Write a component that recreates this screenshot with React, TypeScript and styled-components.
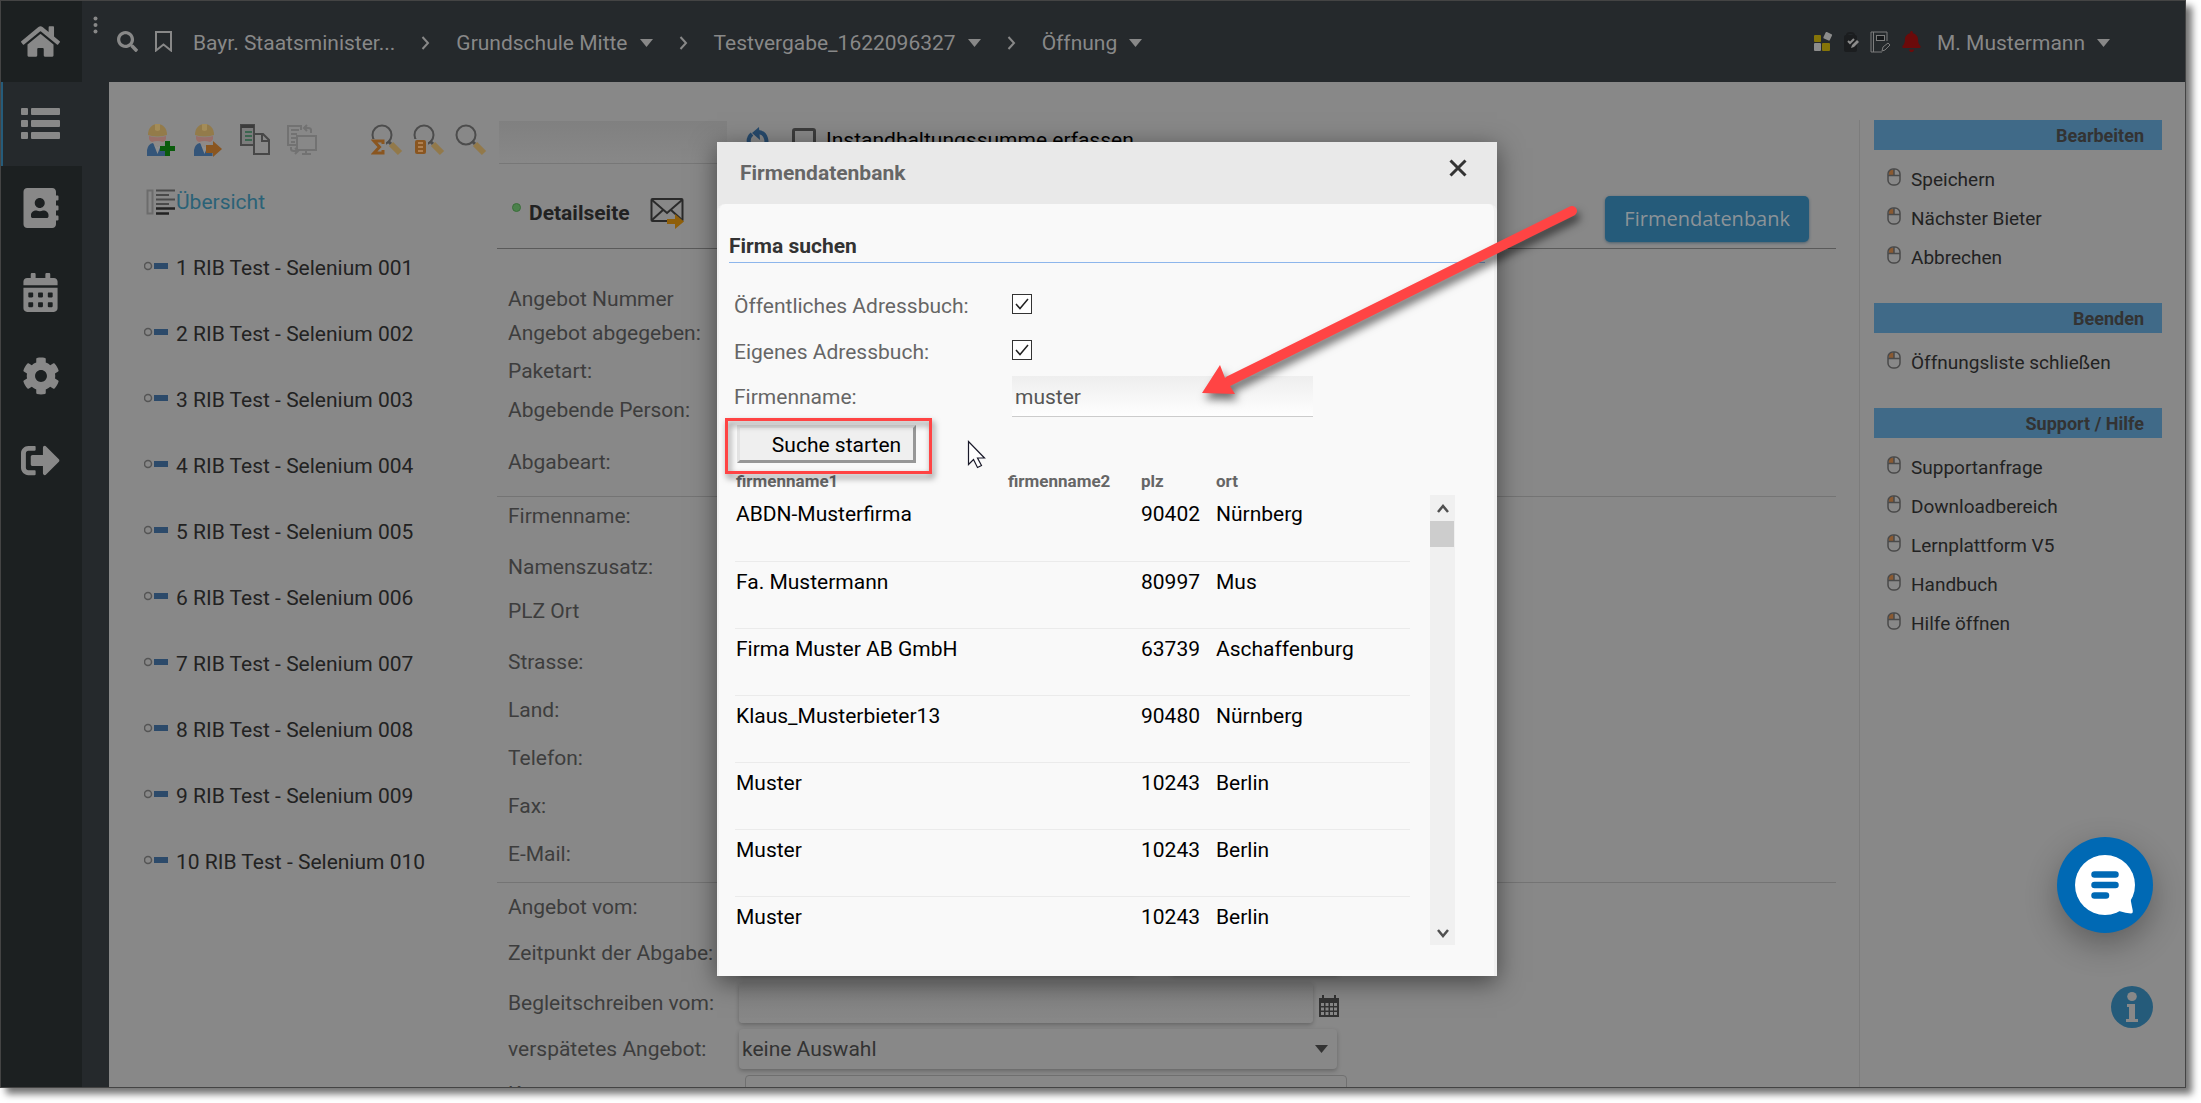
import React from "react";
import styled, { createGlobalStyle, css } from "styled-components";
import {
  FaAddressBook,
  FaBell,
  FaCalendarAlt,
  FaCog,
  FaHome,
  FaSearch,
  FaSignOutAlt,
} from "react-icons/fa";

const color = {
  rail: "#1c2021",
  bar: "#25292c",
  page: "#888888",
  ink: "#222222",
  label: "#3d3d3d",
  blue: "#255b7a",
  heading: "#406a88",
  link: "#2b6277",
  line: "#747474",
  alert: "#ff4444",
};

const Global = createGlobalStyle`
  * { box-sizing: border-box; }
  body {
    margin: 0;
    background: #fff;
    font-family: Roboto, "Liberation Sans", sans-serif;
    font-size: 21px;
    line-height: 24px;
    color: ${color.ink};
  }
  button, input, select, textarea { font: inherit; color: inherit; margin: 0; }
  svg { display: block; flex: none; }
  a { color: inherit; text-decoration: none; }
`;

/* ---------- window frame ---------- */

const Window = styled.div`
  position: relative;
  display: flex;
  margin: 0 15px 15px 0;
  height: calc(100vh - 15px);
  min-height: 600px;
  overflow: hidden;
  border: 1px solid #444;
  background: ${color.bar};
  box-shadow: 6px 6px 7px rgba(0, 0, 0, 0.55);
`;

const Rail = styled.nav`
  flex: none;
  width: 81px;
  background: ${color.rail};
`;

const RailButton = styled.button<{ $active?: boolean }>`
  display: flex;
  align-items: center;
  justify-content: center;
  width: 100%;
  height: 84px;
  padding: 0 2px 0 0;
  border: 0;
  color: ${color.page};
  background: ${(p) => (p.$active ? color.bar : "transparent")};
  box-shadow: ${(p) => (p.$active ? `inset 2px 0 0 ${color.blue}` : "none")};
  &:first-child {
    height: 81px;
  }
`;

const Column = styled.div`
  flex: 1;
  min-width: 0;
  display: flex;
  flex-direction: column;
`;

const TopBar = styled.header`
  flex: none;
  display: flex;
  align-items: center;
  height: 81px;
  padding: 0 75px 0 11px;
  color: ${color.page};
`;

const PlainButton = styled.button`
  display: flex;
  align-items: center;
  padding: 0;
  border: 0;
  background: none;
  color: inherit;
`;

const Kebab = styled(PlainButton)`
  align-self: flex-start;
  margin: 15px 19px 0 0;
`;

const TopTools = styled.div`
  display: flex;
  gap: 17px;
  margin-right: 21px;
`;

const Crumbs = styled.div`
  display: flex;
  align-items: center;
  gap: 26px;
  padding-top: 3px;
`;

const Crumb = styled.button`
  display: flex;
  align-items: center;
  gap: 12px;
  padding: 0;
  border: 0;
  background: none;
  color: inherit;
  white-space: nowrap;
`;

const UserTools = styled.div`
  display: flex;
  align-items: center;
  gap: 10px;
  margin-left: auto;
`;

const UserMenu = styled(Crumb)`
  margin-left: 5px;
  padding-top: 3px;
`;

const Content = styled.div`
  flex: 1;
  min-height: 0;
  display: flex;
  margin-left: 27px;
  background: ${color.page};
  overflow: hidden;
`;

/* ---------- bidder list ---------- */

const Bidders = styled.section`
  flex: none;
  width: 388px;
  padding-left: 35px;
`;

const Toolbar = styled.div`
  display: flex;
  align-items: center;
  height: 43px;
  margin-top: 39px;
  padding-bottom: 6px;
`;

const IconRow = styled.div`
  display: flex;
  align-items: center;
  gap: 17px;
  margin-left: 2px;
`;

const SearchIcons = styled(IconRow)`
  gap: 10px;
  margin-left: 54px;
`;

const BidderList = styled.ul`
  list-style: none;
  margin: 5px 0 0;
  padding: 0;
`;

const Bidder = styled.li`
  height: 66px;
  display: flex;
  align-items: center;
`;

const BidderLink = styled.a<{ $overview?: boolean }>`
  display: flex;
  align-items: center;
  gap: ${(p) => (p.$overview ? "0" : "8px")};
  padding-left: ${(p) => (p.$overview ? "2px" : "0")};
  color: ${(p) => (p.$overview ? color.link : color.ink)};
`;

/* ---------- detail page ---------- */

const Detail = styled.main`
  flex: 1;
  min-width: 0;
  margin-right: 23px;
`;

const FilterInput = styled.input`
  align-self: flex-start;
  width: 228px;
  height: 43px;
  margin: 0 18px 0 2px;
  border: 0;
  border-bottom: 1px solid #777;
  background: linear-gradient(#808080, #888);
`;

const CheckLabel = styled.label`
  display: flex;
  align-items: center;
  gap: 10px;
  margin-left: 22px;
  color: #000;
`;

const SquareCheck = styled.input`
  appearance: none;
  width: 24px;
  height: 24px;
  border: 3px solid #3c3c3c;
  border-radius: 3px;
`;

const DetailHead = styled.div`
  display: flex;
  justify-content: space-between;
  align-items: flex-end;
  height: 85px;
  padding: 0 27px 6px 15px;
  border-bottom: 1px solid #5a5a5a;
`;

const DetailTitle = styled.div`
  display: flex;
  align-items: center;
  gap: 8px;
  height: 46px;
  padding-bottom: 12px;
  & > h1 {
    margin: 0 12px 0 0;
    font-size: 21px;
    font-weight: 700;
  }
`;

const Dot = styled.span`
  width: 9px;
  height: 9px;
  margin-bottom: 12px;
  border-radius: 50%;
  border: 1px solid #3a6e3a;
  background: #4b814b;
`;

const PrimaryButton = styled.button`
  height: 46px;
  padding: 0 19px;
  border: 0;
  border-radius: 5px;
  font-family: "Open Sans", sans-serif;
  font-size: 20px;
  color: #8c9398;
  background: ${color.blue};
  box-shadow: 0 1px 3px rgba(30, 70, 95, 0.6);
`;

const Group = styled.div<{ $top: number }>`
  padding: ${(p) => p.$top}px 0 0 11px;
  & + & {
    border-top: 1px solid ${color.line};
  }
`;

const Row = styled.div<{ $height: number; $center?: boolean }>`
  display: flex;
  align-items: ${(p) => (p.$center ? "center" : "flex-start")};
  height: ${(p) => p.$height}px;
  color: ${color.label};
  & > label {
    flex: none;
    width: 231px;
  }
`;

const fieldLook = css`
  height: 41px;
  border: 0;
  border-radius: 4px;
  background: linear-gradient(#808080, #888);
  box-shadow: 0 2px 4px rgba(0, 0, 0, 0.25);
`;

const Field = styled.input<{ $width: number }>`
  ${fieldLook}
  width: ${(p) => p.$width}px;
`;

const FieldPair = styled.div`
  display: flex;
  gap: 35px;
`;

const DateField = styled.div`
  display: flex;
  align-items: center;
  gap: 6px;
  & > svg {
    margin-top: 6px;
  }
`;

const SelectBox = styled.div`
  position: relative;
  & > select {
    ${fieldLook}
    appearance: none;
    width: 598px;
    height: 40px;
    padding: 0 3px;
    background: ${color.page};
    color: #333;
  }
  & > svg {
    position: absolute;
    right: 9px;
    top: 16px;
  }
`;

const NoteArea = styled.textarea`
  align-self: flex-start;
  width: 602px;
  height: 60px;
  margin: 6px 0 0 6px;
  border: 1px solid #707070;
  border-radius: 4px;
  background: ${color.page};
  resize: none;
`;

/* ---------- action column ---------- */

const Actions = styled.aside`
  flex: none;
  width: 326px;
  margin-top: 38px;
  padding: 0 23px 0 14px;
  border-left: 1px solid #7c7c7c;
`;

const ActionHead = styled.h2`
  margin: 0;
  padding-right: 18px;
  font-size: 18px;
  line-height: 32px;
  height: 30px;
  text-align: right;
  color: #333;
  background: ${color.heading};
`;

const ActionList = styled.ul`
  list-style: none;
  margin: 10px 0 26px;
  padding: 0 0 0 13px;
`;

const ActionItem = styled.li`
  display: flex;
  align-items: center;
  height: 39px;
  font-size: 19px;
  & > a {
    display: flex;
    gap: 10px;
  }
`;

/* ---------- floating buttons ---------- */

const ChatButton = styled.button`
  position: absolute;
  right: 32px;
  bottom: 154px;
  width: 96px;
  height: 96px;
  padding: 0;
  border: 0;
  border-radius: 50%;
  background: #0069b4;
  box-shadow: 0 12px 32px rgba(0, 0, 0, 0.3);
`;

const InfoButton = styled(PlainButton)`
  position: absolute;
  right: 32px;
  bottom: 59px;
`;

/* ---------- dialog ---------- */

const Overlay = styled.div`
  position: absolute;
  inset: 0;
  display: flex;
  justify-content: center;
  align-items: flex-start;
  padding: 141px 0 0 28px;
`;

const Dialog = styled.div`
  position: relative;
  width: 780px;
  background: #e9e9e9;
  box-shadow: 0 6px 24px rgba(0, 0, 0, 0.5);
`;

const DialogHead = styled.header`
  display: flex;
  justify-content: space-between;
  align-items: flex-start;
  height: 62px;
  padding: 17px 30px 0 23px;
  color: #666;
  & > h2 {
    margin: 0;
    font-size: 21px;
    line-height: 28px;
    font-weight: 700;
  }
`;

const DialogBody = styled.div`
  height: 772px;
  padding: 30px 12px 31px;
  border: solid #f1f1f1;
  border-width: 0 3px 0 2px;
  border-radius: 8px 8px 0 0;
  background: #f9f9f9;
`;

const SearchHead = styled.h3`
  margin: 0 -3px 19px -2px;
  padding-bottom: 4px;
  font-size: 21px;
  font-weight: 700;
  color: #333;
  border-bottom: 1px solid #8db6ec;
`;

const SearchRow = styled.div<{ $height: number }>`
  display: grid;
  grid-template-columns: 278px 1fr;
  align-items: center;
  height: ${(p) => p.$height}px;
  padding-left: 3px;
  color: #666;
`;

const BoxCheck = styled.span`
  position: relative;
  width: 20px;
  height: 20px;
  margin-top: -4px;
  & > input {
    appearance: none;
    display: block;
    width: 20px;
    height: 20px;
    border: 1px solid #333;
    background: #fff;
  }
  & > svg {
    position: absolute;
    inset: 0;
    pointer-events: none;
  }
`;

const NameInput = styled.input`
  width: 301px;
  height: 41px;
  padding: 2px 3px 0;
  border: 0;
  border-bottom: 1px solid #ccc;
  color: #555;
  background: linear-gradient(#eee, #fefefe);
`;

const StartWrap = styled.div`
  position: relative;
  width: 179px;
  margin: 7px 0 5px 6px;
`;

const StartButton = styled.button`
  display: block;
  width: 179px;
  height: 38px;
  padding: 2px 0 0 20px;
  border: 3px solid;
  border-color: #e3e3e3 #979797 #979797 #e3e3e3;
  color: #000;
  background: #efefef;
`;

const Marker = styled.div`
  position: absolute;
  inset: -7px -16px -11px -12px;
  border: 3px solid ${color.alert};
  filter: drop-shadow(2px 4px 3px rgba(0, 0, 0, 0.5));
  pointer-events: none;
`;

const Results = styled.div`
  display: flex;
  gap: 20px;
  height: 477px;
  padding-left: 4px;
  overflow: hidden;
`;

const Table = styled.table`
  width: 675px;
  height: max-content;
  border-collapse: collapse;
  table-layout: fixed;
  color: #000;
  & th {
    height: 26px;
    padding: 0 0 0 1px;
    font-size: 17px;
    font-weight: 700;
    text-align: left;
    color: #666;
  }
  & td {
    height: 67px;
    padding: 8px 0 0 1px;
    vertical-align: top;
    white-space: nowrap;
    border-bottom: 1px solid #ebebeb;
  }
`;

const NameColumn = styled.col`
  width: 272px;
`;

const ExtraColumn = styled.col`
  width: 133px;
`;

const ZipColumn = styled.col`
  width: 75px;
`;

const ScrollTrack = styled.div`
  display: flex;
  flex-direction: column;
  justify-content: space-between;
  width: 25px;
  margin-top: 27px;
  background: #f0f0f0;
`;

const ScrollButton = styled(PlainButton)`
  justify-content: center;
  width: 25px;
  height: 26px;
  padding-top: 2px;
`;

const ScrollThumb = styled.div`
  width: 24px;
  height: 26px;
  margin-bottom: auto;
  background: #cdcdcd;
`;

const Cursor = styled.svg`
  position: absolute;
  left: 250px;
  top: 298px;
`;

const Arrow = styled.svg`
  position: absolute;
  left: 480px;
  top: 58px;
  filter: drop-shadow(3px 6px 4px rgba(0, 0, 0, 0.55));
  pointer-events: none;
`;

/* ---------- drawings ---------- */

const Caret = ({ fill = "currentColor" }: { fill?: string }) => (
  <svg width="13" height="8" viewBox="0 0 13 8">
    <path d="M0 0h13L6.500 8z" fill={fill} />
  </svg>
);

const Chevron = () => (
  <svg width="9" height="14" viewBox="0 0 9 14">
    <path d="M1.500 1l5.500 6-5.500 6" fill="none" stroke="currentColor" strokeWidth="2" />
  </svg>
);

const ListIcon = () => (
  <svg width="39" height="32" viewBox="0 0 39 32" fill="currentColor">
    {[0, 12, 24].map((y) => (
      <g key={y}>
        <rect x="0" y={y} width="7" height="7" rx="1" />
        <rect x="10" y={y} width="29" height="7" rx="1" />
      </g>
    ))}
  </svg>
);

const WorkerIcon = ({ kind }: { kind: "add" | "go" }) => (
  <svg width="30" height="34" viewBox="0 0 30 34">
    <path d="M2 12C2 5 6 1 11.500 1S21 5 21 12q-9.500 3-19 0z" fill="#937b4a" />
    <path d="M9 1h5v6q-2.500 2-5 0z" fill="#a38c58" />
    <path d="M3 13q8.500 2.500 17 0v3c-1 4-4 7-8.500 7S4 20 3 16z" fill="#8f8a88" />
    <path d="M3 13q8.500 2.500 17 0v3q-1 3-3 3-5.500-2-11 0-2 0-3-3z" fill="#996f69" />
    <path d="M1 33V27q1-6 6-7l4.500 8 3-5 5 4v6z" fill="#345579" />
    <path d="M8 22l3.500 9 3.500-9-3.500 2z" fill="#8f8f8f" />
    {kind === "add" ? (
      <path d="M19 18h5v5h5v5h-5v5h-5v-5h-5v-5h5z" fill="#0a5c0c" />
    ) : (
      <path d="M13 22h7v-4l9 8-9 8v-4h-7z" fill="#8a5620" />
    )}
  </svg>
);

const CopyIcon = () => (
  <svg width="30" height="32" viewBox="0 0 30 32" fill="none">
    <path d="M1 1h13v20H1z" stroke="#474747" strokeWidth="2" fill="#7c7c7c" />
    <path d="M1 2.500h13" stroke="#3c3c3c" strokeWidth="3" />
    <path d="M5 8h7M5 12h7M5 16h7" stroke="#3c6650" strokeWidth="2" />
    <path d="M14 10h9l6 6v14H14z" stroke="#474747" strokeWidth="2" fill={color.page} />
    <path d="M22 10v7h7" stroke="#474747" strokeWidth="2" />
  </svg>
);

const TransferIcon = () => (
  <svg width="30" height="32" viewBox="0 0 30 32" fill="none" stroke="#727272" strokeWidth="2">
    <path d="M9 21H1V2h13v4" />
    <path d="M4 6h8M4 10h6M4 14h5M4 18h4" />
    <path d="M10 12h19v14H10z" />
    <path d="M19 26v3M15 30h9" />
    <path d="M24 9V6q0-2-3-2h-4m3-3l-3 3 3 3M4 23v2q0 2 3 2h4m-3-3l3 3-3 3" />
  </svg>
);

const LensIcon = ({ kind }: { kind?: "sum" | "data" }) => (
  <svg width="32" height="32" viewBox="0 0 32 32" fill="none">
    <circle cx="11" cy="11" r="9.500" stroke="#4c4c4c" strokeWidth="2" />
    <path d="M17 17l3 3" stroke="#4c4c4c" strokeWidth="3" />
    <path d="M20 20l9 9" stroke="#92794a" strokeWidth="6" />
    {kind && <path d="M0 15h15v17H0z" fill={color.page} />}
    {kind === "sum" && (
      <path d="M12 20v-3H3l5.500 6L3 29h9v-3" stroke="#8a5620" strokeWidth="3" />
    )}
    {kind === "data" && (
      <>
        <rect x="2" y="16" width="11" height="14" rx="2" fill="#8a5620" />
        <path d="M5 19h5M5 23h5M5 27h5" stroke="#b08050" strokeWidth="2" />
      </>
    )}
  </svg>
);

const OverviewIcon = () => (
  <svg width="30" height="26" viewBox="0 0 30 26" fill="none">
    <path d="M1.500 1.500h5v23h-5z" stroke="#6c6c6c" strokeWidth="2" />
    <path d="M10 1.500h19M10 6h13M10 10.500h19M10 15h13" stroke="#4a4a4a" strokeWidth="2" />
    <path d="M10 19.500h19M10 24.500h13" stroke="#222" strokeWidth="2.500" />
  </svg>
);

const KeyIcon = () => (
  <svg width="24" height="14" viewBox="0 0 24 14">
    <circle cx="4" cy="5" r="3.500" fill="none" stroke="#555" strokeWidth="1.500" />
    <rect x="10" y="2" width="14" height="6" fill="#2c4a6a" />
  </svg>
);

const RefreshIcon = () => (
  <svg width="25" height="26" viewBox="0 0 25 26" fill="none">
    <path d="M7 21A9 9 0 0 1 7 7M13 5A9 9 0 0 1 18 21" stroke="#274a6c" strokeWidth="4" />
    <path d="M14 0L7 6l8 7z" fill="#274a6c" />
  </svg>
);

const MailIcon = () => (
  <svg width="35" height="32" viewBox="0 0 35 32" fill="none">
    <rect x="1.500" y="2" width="31" height="22" rx="1" stroke="#2a2a2a" strokeWidth="2" />
    <path d="M2 3l15 13L32 3M2 23l11-10M32 23L21 13" stroke="#2a2a2a" strokeWidth="2" />
    <path d="M17 22h8v-5l9 7.500-9 7.500v-5h-8z" fill="#8f5f0a" />
  </svg>
);

const MouseIcon = () => (
  <svg width="14" height="18" viewBox="0 0 14 18">
    <path d="M2 2h5v5H2z" fill="#8a5a32" />
    <rect x="1" y="1" width="12" height="16" rx="5" fill="none" stroke="#4a4a4a" strokeWidth="1.500" />
    <path d="M1 7.500h12M7 1v6.500" stroke="#4a4a4a" strokeWidth="1.500" />
  </svg>
);

const MonthIcon = () => (
  <svg width="20" height="22" viewBox="0 0 20 22">
    <path d="M4 0v4M16 0v4" stroke="#333" strokeWidth="2" />
    <path d="M0 3h20v19H0z" fill="#333" />
    <path
      d="M2 8h3v3H2zM6.500 8h3v3h-3zM11 8h3v3h-3zM15 8h3v3h-3zM2 12.500h3v3H2zM6.500 12.500h3v3h-3zM11 12.500h3v3h-3zM15 12.500h3v3h-3zM2 17h3v3H2zM6.500 17h3v3h-3zM11 17h3v3h-3zM15 17h3v3h-3z"
      fill={color.page}
    />
  </svg>
);

const BlocksIcon = () => (
  <svg width="20" height="20" viewBox="0 0 20 20">
    <rect x="0" y="3" width="7" height="7" rx="1" fill="#857408" />
    <rect x="8" y="11" width="8" height="8" rx="1" fill="#857408" />
    <rect x="0" y="11" width="7" height="8" rx="1" fill="#8c8c8c" />
    <rect x="10" y="1" width="7" height="7" rx="1" fill="#8c8c8c" transform="rotate(25 14 5)" />
  </svg>
);

const ClipIcon = () => (
  <svg width="16" height="20" viewBox="0 0 16 20">
    <rect x="0" y="3" width="13" height="17" rx="2" fill="#1b1d1f" />
    <path d="M3 5V3q0-2 3.500-2T10 3v2z" fill="none" stroke="#1b1d1f" strokeWidth="2" />
    <path d="M4 9l2 2 4-4" fill="none" stroke="#8c8c8c" strokeWidth="2" />
    <path d="M7 16l1-3 5-5 2 2-5 5z" fill="#8c8c8c" />
  </svg>
);

const NotebookIcon = () => (
  <svg width="21" height="22" viewBox="0 0 21 22" fill="none" stroke="#7d7d7d">
    <path d="M12 21H1V1h16v9M3.500 1v20" />
    <rect x="6.500" y="4.500" width="8" height="5" fill="#17191b" />
    <path d="M12 20l1-4 5-4 2 2-5 5z" />
  </svg>
);

const InfoIcon = () => (
  <svg width="42" height="42" viewBox="0 0 42 42">
    <circle cx="21" cy="21" r="21" fill={color.blue} />
    <ellipse cx="21" cy="10.500" rx="4.800" ry="4.500" fill={color.page} />
    <path d="M16 18h8v15h3v3H15v-3h3V21h-2z" fill={color.page} />
  </svg>
);

const ChatIcon = () => (
  <svg width="96" height="96" viewBox="0 0 96 96">
    <circle cx="48" cy="48" r="30" fill="#fff" />
    <path d="M62 74q7 2 12 2.500 2 0 1.800-2.500L73.500 62z" fill="#fff" />
    <path
      d="M37.500 37.500h21M37.500 48h21M37.500 58.500h11.500"
      stroke="#0069b4"
      strokeWidth="6.500"
      strokeLinecap="round"
    />
  </svg>
);

/* ---------- data ---------- */

const bidders = Array.from(
  { length: 10 },
  (_, i) => `${i + 1} RIB Test - Selenium ${String(i + 1).padStart(3, "0")}`
);

const offerRows: [string, number][] = [
  ["Angebot Nummer", 34],
  ["Angebot abgegeben:", 38],
  ["Paketart:", 39],
  ["Abgebende Person:", 52],
  ["Abgabeart:", 46],
];

const companyRows: [string, number][] = [
  ["Firmenname:", 51],
  ["Namenszusatz:", 44],
  ["PLZ Ort", 51],
  ["Strasse:", 48],
  ["Land:", 48],
  ["Telefon:", 48],
  ["Fax:", 48],
  ["E-Mail:", 40],
];

const actionGroups = [
  { title: "Bearbeiten", items: ["Speichern", "Nächster Bieter", "Abbrechen"] },
  { title: "Beenden", items: ["Öffnungsliste schließen"] },
  {
    title: "Support / Hilfe",
    items: ["Supportanfrage", "Downloadbereich", "Lernplattform V5", "Handbuch", "Hilfe öffnen"],
  },
];

const companies = [
  ["ABDN-Musterfirma", "", "90402", "Nürnberg"],
  ["Fa. Mustermann", "", "80997", "Mus"],
  ["Firma Muster AB GmbH", "", "63739", "Aschaffenburg"],
  ["Klaus_Musterbieter13", "", "90480", "Nürnberg"],
  ["Muster", "", "10243", "Berlin"],
  ["Muster", "", "10243", "Berlin"],
  ["Muster", "", "10243", "Berlin"],
];

/* ---------- page ---------- */

function TopNavigation() {
  return (
    <TopBar>
      <Kebab aria-label="Menü">
        <svg width="5" height="18" viewBox="0 0 5 18" fill="currentColor">
          <circle cx="2.500" cy="2.500" r="2" />
          <circle cx="2.500" cy="9" r="2" />
          <circle cx="2.500" cy="15.500" r="2" />
        </svg>
      </Kebab>
      <TopTools>
        <PlainButton aria-label="Suche"><FaSearch size={21} /></PlainButton>
        <PlainButton aria-label="Lesezeichen">
          <svg width="17" height="21" viewBox="0 0 17 21">
            <path d="M1 1h15v18.500l-7.500-6-7.500 6z" fill="none" stroke="currentColor" strokeWidth="2" />
          </svg>
        </PlainButton>
      </TopTools>
      <Crumbs>
        <Crumb>Bayr. Staatsminister...</Crumb>
        <Chevron />
        <Crumb>Grundschule Mitte <Caret /></Crumb>
        <Chevron />
        <Crumb>Testvergabe_1622096327 <Caret /></Crumb>
        <Chevron />
        <Crumb>Öffnung <Caret /></Crumb>
      </Crumbs>
      <UserTools>
        <BlocksIcon />
        <ClipIcon />
        <NotebookIcon />
        <FaBell size={21} color="#6b0a0a" />
        <UserMenu>M. Mustermann <Caret /></UserMenu>
      </UserTools>
    </TopBar>
  );
}

function BidderPanel() {
  return (
    <Bidders>
      <Toolbar>
        <IconRow>
          <WorkerIcon kind="add" />
          <WorkerIcon kind="go" />
          <CopyIcon />
          <TransferIcon />
        </IconRow>
        <SearchIcons>
          <LensIcon kind="sum" />
          <LensIcon kind="data" />
          <LensIcon />
        </SearchIcons>
      </Toolbar>
      <BidderList>
        <Bidder>
          <BidderLink href="#uebersicht" $overview><OverviewIcon />Übersicht</BidderLink>
        </Bidder>
        {bidders.map((name) => (
          <Bidder key={name}>
            <BidderLink href="#bieter"><KeyIcon />{name}</BidderLink>
          </Bidder>
        ))}
      </BidderList>
    </Bidders>
  );
}

function DetailPage() {
  return (
    <Detail>
      <Toolbar>
        <FilterInput aria-label="Bieter suchen" />
        <PlainButton aria-label="Aktualisieren"><RefreshIcon /></PlainButton>
        <CheckLabel>
          <SquareCheck type="checkbox" />
          Instandhaltungssumme erfassen
        </CheckLabel>
      </Toolbar>
      <DetailHead>
        <DetailTitle>
          <Dot />
          <h1>Detailseite</h1>
          <MailIcon />
        </DetailTitle>
        <PrimaryButton>Firmendatenbank</PrimaryButton>
      </DetailHead>
      <Group $top={38}>
        {offerRows.map(([label, height]) => (
          <Row key={label} $height={height}>{label}</Row>
        ))}
      </Group>
      <Group $top={7}>
        {companyRows.map(([label, height]) => (
          <Row key={label} $height={height}>{label}</Row>
        ))}
      </Group>
      <Group $top={1}>
        <Row $height={46} $center>Angebot vom:</Row>
        <Row $height={46} $center>
          <label htmlFor="abgabe">Zeitpunkt der Abgabe:</label>
          <FieldPair>
            <Field id="abgabe" $width={397} />
            <Field aria-label="Uhrzeit der Abgabe" $width={168} />
          </FieldPair>
        </Row>
        <Row $height={53} $center>
          <label htmlFor="begleit">Begleitschreiben vom:</label>
          <DateField>
            <Field id="begleit" $width={574} />
            <MonthIcon />
          </DateField>
        </Row>
        <Row $height={40} $center>
          <label htmlFor="spaet">verspätetes Angebot:</label>
          <SelectBox>
            <select id="spaet" defaultValue="keine Auswahl">
              <option>keine Auswahl</option>
            </select>
            <Caret fill="#333" />
          </SelectBox>
        </Row>
        <Row $height={50} $center>
          <label htmlFor="kommentar">Kommentar:</label>
          <NoteArea id="kommentar" />
        </Row>
      </Group>
    </Detail>
  );
}

function CompanyDialog() {
  return (
    <Dialog role="dialog" aria-label="Firmendatenbank">
      <DialogHead>
        <h2>Firmendatenbank</h2>
        <PlainButton aria-label="Schließen">
          <svg width="18" height="18" viewBox="0 0 18 18">
            <path d="M1.500 1.500l15 15M16.500 1.500l-15 15" stroke="#333" strokeWidth="3" />
          </svg>
        </PlainButton>
      </DialogHead>
      <DialogBody>
        <SearchHead>Firma suchen</SearchHead>
        <SearchRow $height={47}>
          <label htmlFor="public">Öffentliches Adressbuch:</label>
          <BoxCheck>
            <input id="public" type="checkbox" defaultChecked />
            <Tick />
          </BoxCheck>
        </SearchRow>
        <SearchRow $height={46}>
          <label htmlFor="own">Eigenes Adressbuch:</label>
          <BoxCheck>
            <input id="own" type="checkbox" defaultChecked />
            <Tick />
          </BoxCheck>
        </SearchRow>
        <SearchRow $height={43}>
          <label htmlFor="firma">Firmenname:</label>
          <NameInput id="firma" defaultValue="muster" />
        </SearchRow>
        <StartWrap>
          <StartButton>Suche starten</StartButton>
          <Marker />
        </StartWrap>
        <Results>
          <Table>
            <colgroup>
              <NameColumn />
              <ExtraColumn />
              <ZipColumn />
              <col />
            </colgroup>
            <thead>
              <tr>
                <th>firmenname1</th>
                <th>firmenname2</th>
                <th>plz</th>
                <th>ort</th>
              </tr>
            </thead>
            <tbody>
              {companies.map((row, i) => (
                <tr key={i}>
                  {row.map((cell, j) => (
                    <td key={j}>{cell}</td>
                  ))}
                </tr>
              ))}
            </tbody>
          </Table>
          <ScrollTrack>
            <ScrollButton aria-label="Nach oben">
              <svg width="12" height="10" viewBox="0 0 12 10">
                <path d="M1 8l5-6 5 6" fill="none" stroke="#505050" strokeWidth="2.500" />
              </svg>
            </ScrollButton>
            <ScrollThumb />
            <ScrollButton aria-label="Nach unten">
              <svg width="12" height="10" viewBox="0 0 12 10">
                <path d="M1 2l5 6 5-6" fill="none" stroke="#505050" strokeWidth="2.500" />
              </svg>
            </ScrollButton>
          </ScrollTrack>
        </Results>
      </DialogBody>
      <Cursor width="20" height="30" viewBox="0 0 20 30">
        <path
          d="M1.500 1.500v23l5-5 4 8 4-2-4-7.500h7z"
          fill="#fff"
          stroke="#1a1a2a"
          strokeWidth="1.200"
        />
      </Cursor>
      <Arrow width="390" height="200" viewBox="0 0 390 200">
        <path d="M375 11L32 181" stroke={color.alert} strokeWidth="10" strokeLinecap="round" />
        <path d="M5 193L23 165 28 178 38 194z" fill={color.alert} />
      </Arrow>
    </Dialog>
  );
}

const Tick = () => (
  <svg width="20" height="20" viewBox="0 0 20 20">
    <path d="M4 10l4 4.500 8-9.500" fill="none" stroke="#222" strokeWidth="1.500" />
  </svg>
);

export default function App() {
  return (
    <>
      <Global />
      <Window>
        <Rail aria-label="Hauptnavigation">
          <RailButton aria-label="Start"><FaHome size={39} /></RailButton>
          <RailButton aria-label="Liste" $active><ListIcon /></RailButton>
          <RailButton aria-label="Adressbuch"><FaAddressBook size={40} /></RailButton>
          <RailButton aria-label="Kalender"><FaCalendarAlt size={39} /></RailButton>
          <RailButton aria-label="Einstellungen"><FaCog size={38} /></RailButton>
          <RailButton aria-label="Abmelden"><FaSignOutAlt size={39} /></RailButton>
        </Rail>
        <Column>
          <TopNavigation />
          <Content>
            <BidderPanel />
            <DetailPage />
            <Actions>
              {actionGroups.map((group) => (
                <section key={group.title}>
                  <ActionHead>{group.title}</ActionHead>
                  <ActionList>
                    {group.items.map((item) => (
                      <ActionItem key={item}>
                        <a href="#aktion"><MouseIcon />{item}</a>
                      </ActionItem>
                    ))}
                  </ActionList>
                </section>
              ))}
            </Actions>
          </Content>
        </Column>
        <InfoButton aria-label="Information"><InfoIcon /></InfoButton>
        <Overlay>
          <CompanyDialog />
        </Overlay>
        <ChatButton aria-label="Chat öffnen"><ChatIcon /></ChatButton>
      </Window>
    </>
  );
}
